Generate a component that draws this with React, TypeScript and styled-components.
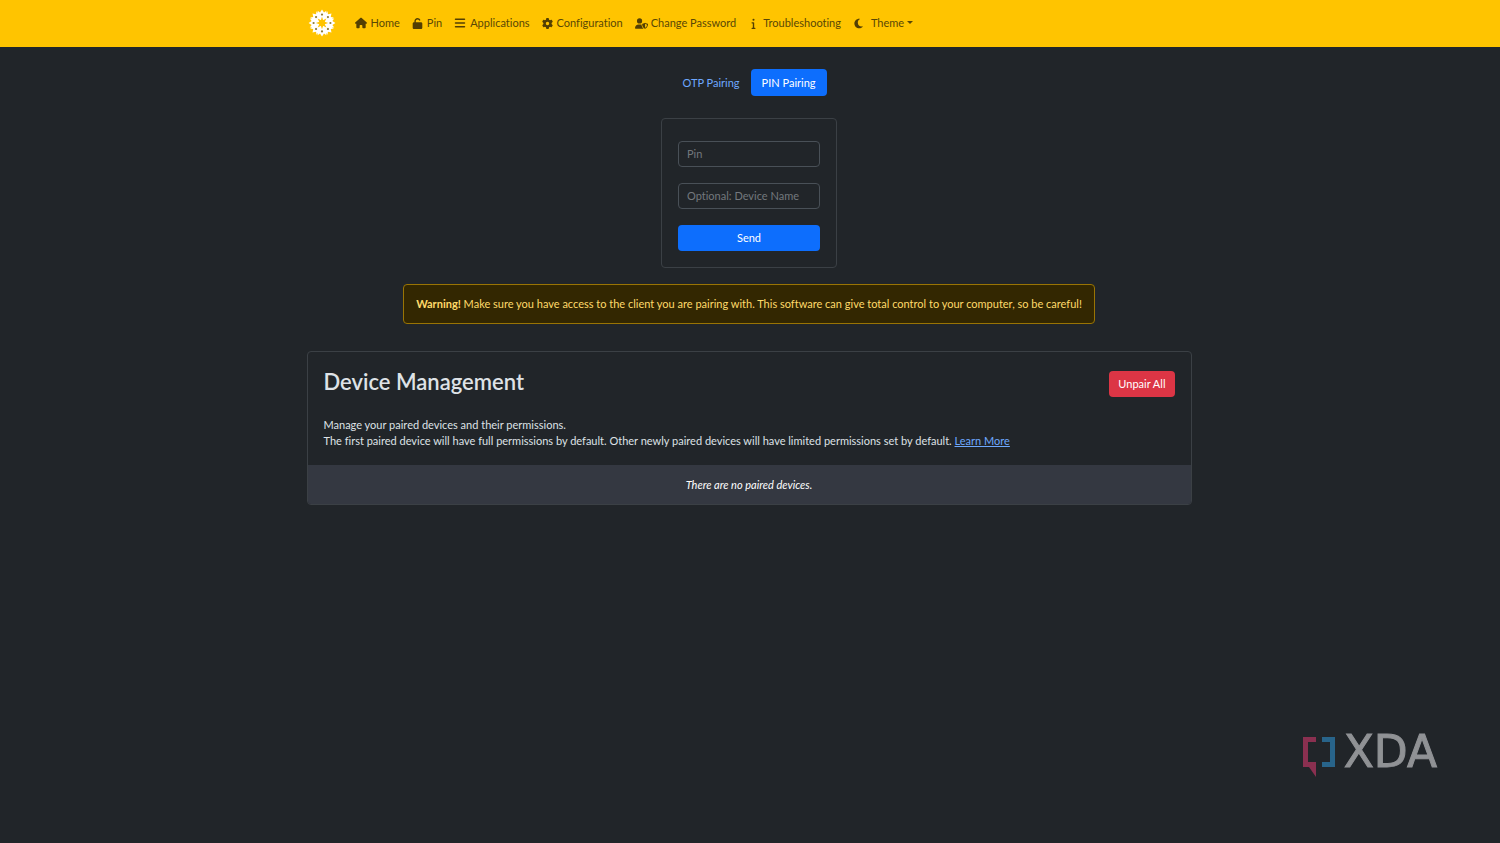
import React from 'react';
import styled, { createGlobalStyle } from 'styled-components';
import { FaHouse, FaUnlock, FaBars, FaGear, FaUserShield, FaInfo, FaMoon } from 'react-icons/fa6';

const GlobalStyle = createGlobalStyle`
  *, *::before, *::after { box-sizing: border-box; }
  body {
    margin: 0;
    min-height: 100vh;
    background: #212529;
    color: #dee2e6;
    font: 400 11px/16px Lato, "Open Sans", sans-serif;
    font-variant-ligatures: none;
  }
  h1, p { margin: 0; }
  button, input { font: inherit; font-variant-ligatures: none; }
`;

const Container = styled.div`
  width: 100%;
  max-width: 885px;
  margin: 0 auto;
`;

const Navbar = styled.header`
  background: #ffc400;
  padding: 0 2px 1px 0;
`;

const NavInner = styled(Container)`
  display: flex;
  align-items: center;
  height: 46px;
`;

const Brand = styled.a`
  display: flex;
  margin-right: 18px;
`;

const NavList = styled.nav`
  display: flex;
  gap: 12px;
`;

const NavLink = styled.a<{ $space?: number }>`
  display: flex;
  align-items: center;
  gap: ${({ $space = 4 }) => $space}px;
  color: #594706;
  text-decoration: none;
  white-space: nowrap;
  svg { color: #533f03; flex: none; }
`;

const Caret = styled.span`
  display: inline-block;
  margin-left: 3px;
  vertical-align: 3px;
  border: 3px solid transparent;
  border-top-color: currentColor;
  border-bottom: 0;
`;

const Main = styled.main`
  padding: 22px 2px 22px 0;
`;

const Tabs = styled.div`
  display: flex;
  justify-content: center;
  margin-bottom: 22px;
`;

const Tab = styled.button<{ $active?: boolean }>`
  height: 27px;
  padding: 0 11px;
  border: 0;
  border-radius: 4px;
  background: ${({ $active }) => ($active ? '#0d6efd' : 'transparent')};
  color: ${({ $active }) => ($active ? '#fff' : '#6ea8fe')};
`;

const PinForm = styled.form`
  display: flex;
  flex-direction: column;
  gap: 16px;
  width: 176px;
  margin: 0 auto 16px;
  padding: 22px 16px 16px;
  border: 1px solid #3b4045;
  border-radius: 4px;
`;

const Field = styled.input`
  width: 100%;
  height: 26px;
  padding: 0 8px 2px;
  border: 1px solid #495057;
  border-radius: 4px;
  background: #212529;
  color: #dee2e6;
  &::placeholder { color: #73787d; opacity: 1; }
`;

const Button = styled.button<{ $danger?: boolean }>`
  height: 26px;
  padding: 0 9px;
  border: 0;
  border-radius: 4px;
  background: ${({ $danger }) => ($danger ? '#dc3545' : '#0d6efd')};
  color: #fff;
  white-space: nowrap;
`;

const Warning = styled.div`
  width: fit-content;
  margin: 0 auto 27px;
  padding: 11px 12px;
  border: 1px solid #997404;
  border-radius: 4px;
  background: #332701;
  color: #ffda6a;
`;

const Card = styled.section`
  border: 1px solid #3b4045;
  border-radius: 4px;
  overflow: hidden;
`;

const CardBody = styled.div`
  padding: 16px;
`;

const CardHeader = styled.div`
  display: flex;
  justify-content: space-between;
  align-items: flex-end;
  margin-bottom: 20px;
`;

const Title = styled.h1`
  font-size: 22px;
  line-height: 28px;
  font-weight: 600;
  padding-bottom: 1px;
`;

const Link = styled.a`
  color: #6ea8fe;
`;

const Empty = styled.p`
  padding: 12px 12px 11px;
  background: #343841;
  color: #fff;
  font-style: italic;
  text-align: center;
`;

const Watermark = styled.div`
  position: fixed;
  right: 63px;
  bottom: 65px;
  display: flex;
  gap: 8px;
  color: #909295;
  font: 400 44px/32px "DejaVu Sans", sans-serif;
  -webkit-text-stroke: 1px currentColor;
`;

const lobes = [0, 45, 90, 135, 180, 225, 270, 315];

function Flower() {
  return (
    <svg width="30" height="30" viewBox="-15 -15 30 30" aria-hidden="true">
      {lobes.map((a) => (
        <path
          key={a}
          transform={`rotate(${a})`}
          d="M-3.4 -2 L-4.4 -12.2 L-2 -10.4 L0 -13.4 L2 -10.4 L4.4 -12.2 L3.4 -2Z"
          fill="#fff"
        />
      ))}
      {lobes.map((a) => (
        <g key={a} transform={`rotate(${a})`}>
          <path d="M0 -6.2 L1.4 -2 L-1.4 -2Z" fill="#ffc400" />
          <circle r="1.1" cy="-8.4" fill="#8f7a35" />
        </g>
      ))}
      <circle r="2.8" fill="#ffc400" />
    </svg>
  );
}

function App() {
  return (
    <>
      <GlobalStyle />
      <Navbar>
        <NavInner>
          <Brand href="#" aria-label="Dashboard"><Flower /></Brand>
          <NavList>
            <NavLink href="#home"><FaHouse size={12} />Home</NavLink>
            <NavLink href="#pin"><FaUnlock size={11} />Pin</NavLink>
            <NavLink href="#apps"><FaBars size={12} />Applications</NavLink>
            <NavLink href="#config"><FaGear size={11} />Configuration</NavLink>
            <NavLink href="#password" $space={3}><FaUserShield size={13} />Change Password</NavLink>
            <NavLink href="#help"><FaInfo size={11} />Troubleshooting</NavLink>
            <NavLink href="#theme" $space={7}><FaMoon size={11} /><span>Theme<Caret /></span></NavLink>
          </NavList>
        </NavInner>
      </Navbar>
      <Main>
        <Tabs>
          <Tab type="button">OTP Pairing</Tab>
          <Tab type="button" $active>PIN Pairing</Tab>
        </Tabs>
        <PinForm onSubmit={(e) => e.preventDefault()}>
          <Field aria-label="Pin" placeholder="Pin" />
          <Field aria-label="Device name" placeholder="Optional: Device Name" />
          <Button type="submit">Send</Button>
        </PinForm>
        <Warning>
          <b>Warning!</b> Make sure you have access to the client you are pairing with. This software can give total control to your computer, so be careful!
        </Warning>
        <Container>
          <Card>
            <CardBody>
              <CardHeader>
                <Title>Device Management</Title>
                <Button type="button" $danger>Unpair All</Button>
              </CardHeader>
              <p>Manage your paired devices and their permissions.</p>
              <p>
                The first paired device will have full permissions by default. Other newly paired devices will have limited permissions set by default.{' '}
                <Link href="#learn">Learn More</Link>
              </p>
            </CardBody>
            <Empty>There are no paired devices.</Empty>
          </Card>
        </Container>
      </Main>
      <Watermark>
        <svg width="34" height="42" viewBox="0 0 34 42" aria-hidden="true">
          <path d="M14 1H1V31H7L14 41V31H14V26H6V6H14Z" fill="#8a3050" />
          <path d="M20 1H33V31H20V26H28V6H20Z" fill="#28648a" />
        </svg>
        <span>XDA</span>
      </Watermark>
    </>
  );
}

export default App;
